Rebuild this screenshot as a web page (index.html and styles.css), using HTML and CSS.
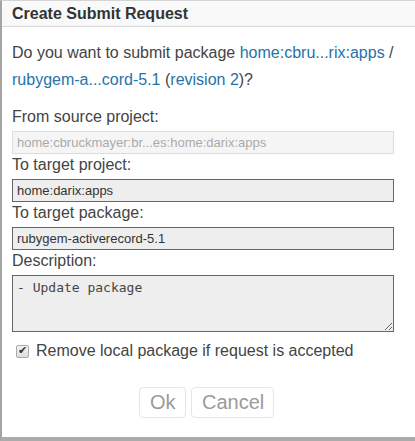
FILE: index.html
```html
<!DOCTYPE html>
<html>
<head>
<meta charset="utf-8">
<link rel="stylesheet" href="styles.css">
</head>
<body>
<div class="dialog">
  <div class="header"><span class="title">Create Submit Request</span></div>
  <div class="content">
    <p class="intro">Do you want to submit package <a href="#">home:cbru...rix:apps</a> / <a href="#">rubygem-a...cord-5.1</a> (<a href="#">revision 2</a>)?</p>
    <label class="lbl">From source project:</label>
    <input class="field disabled" type="text" value="home:cbruckmayer:br...es:home:darix:apps" disabled>
    <label class="lbl">To target project:</label>
    <input class="field" type="text" value="home:darix:apps">
    <label class="lbl">To target package:</label>
    <input class="field" type="text" value="rubygem-activerecord-5.1">
    <label class="lbl">Description:</label>
    <textarea class="desc">- Update package</textarea>
    <div class="check-row">
      <input class="chk" type="checkbox" checked>
      <span class="chk-label">Remove local package if request is accepted</span>
    </div>
    <div class="buttons">
      <button class="btn btn-ok" disabled>Ok</button>
      <button class="btn btn-cancel" disabled>Cancel</button>
    </div>
  </div>
</div>
</body>
</html>
```
FILE: styles.css
```css
html, body {
  margin: 0;
  padding: 0;
  background: #fff;
}
body {
  font-family: "Liberation Sans", Arial, sans-serif;
  color: #444;
}
.dialog {
  box-sizing: border-box;
  width: 415px;
  height: 441px;
  border-top: 1px solid #d4d4d4;
  border-left: 2px solid #a4a4a4;
  border-bottom: 4px solid #ababab;
  background: #fff;
  display: flex;
  flex-direction: column;
}
.header {
  height: 25px;
  background: #f9f9f9;
  border-bottom: 1px solid #d6d6d6;
  display: flex;
  align-items: center;
  padding-left: 10px;
}
.title {
  font-weight: bold;
  font-size: 16px;
  color: #333;
}
.content {
  padding: 0 20px 0 10px;
  display: flex;
  flex-direction: column;
}
.intro {
  margin: 12px 0 13px 0;
  font-size: 16px;
  line-height: 27px;
}
.intro a {
  color: #2673a8;
  text-decoration: none;
}
.lbl {
  display: block;
  font-size: 16px;
  line-height: 20px;
  margin: 1px 0 4px 0;
}
.field {
  box-sizing: border-box;
  width: 382px;
  height: 23px;
  margin: 0;
  padding: 0 4px;
  font-family: "Liberation Sans", Arial, sans-serif;
  font-size: 13px;
  color: #333;
  background: #eeeeee;
  border: 1px solid #666;
  outline: none;
}
.field.disabled {
  background: #f5f5f5;
  border: 1px solid #dddddd;
  color: #aaa;
}
.desc {
  box-sizing: border-box;
  width: 382px;
  height: 57px;
  margin: 0;
  padding: 4px 4px;
  font-family: "DejaVu Sans Mono", monospace;
  font-size: 13px;
  color: #444;
  background: #eeeeee;
  border: 1px solid #666;
  resize: vertical;
}
.check-row {
  display: flex;
  align-items: center;
  margin-top: 9px;
  padding-left: 4px;
  height: 20px;
}
.chk {
  appearance: none;
  -webkit-appearance: none;
  box-sizing: border-box;
  width: 13px;
  height: 13px;
  margin: 0 7px 0 0;
  border: 1px solid #aaa;
  border-radius: 2px;
  background: linear-gradient(#f4f4f4, #dcdcdc);
  position: relative;
}
.chk:checked::after {
  content: "\2714";
  position: absolute;
  left: 1px;
  top: -2px;
  font-size: 11px;
  color: #333;
  font-family: "DejaVu Sans", sans-serif;
}
.chk-label {
  font-size: 16px;
}
.buttons {
  display: flex;
  justify-content: center;
  gap: 5px;
  margin-top: 26px;
  padding-left: 6px;
}
.btn {
  height: 31px;
  font-family: "Liberation Sans", Arial, sans-serif;
  font-size: 20px;
  color: #9a9a9a;
  background: #fff;
  border: 1px solid #e6e6e6;
  border-radius: 4px;
  padding: 0 10px;
}
.btn-ok {
  width: 47px;
}
.btn-cancel {
  width: 83px;
}
```
